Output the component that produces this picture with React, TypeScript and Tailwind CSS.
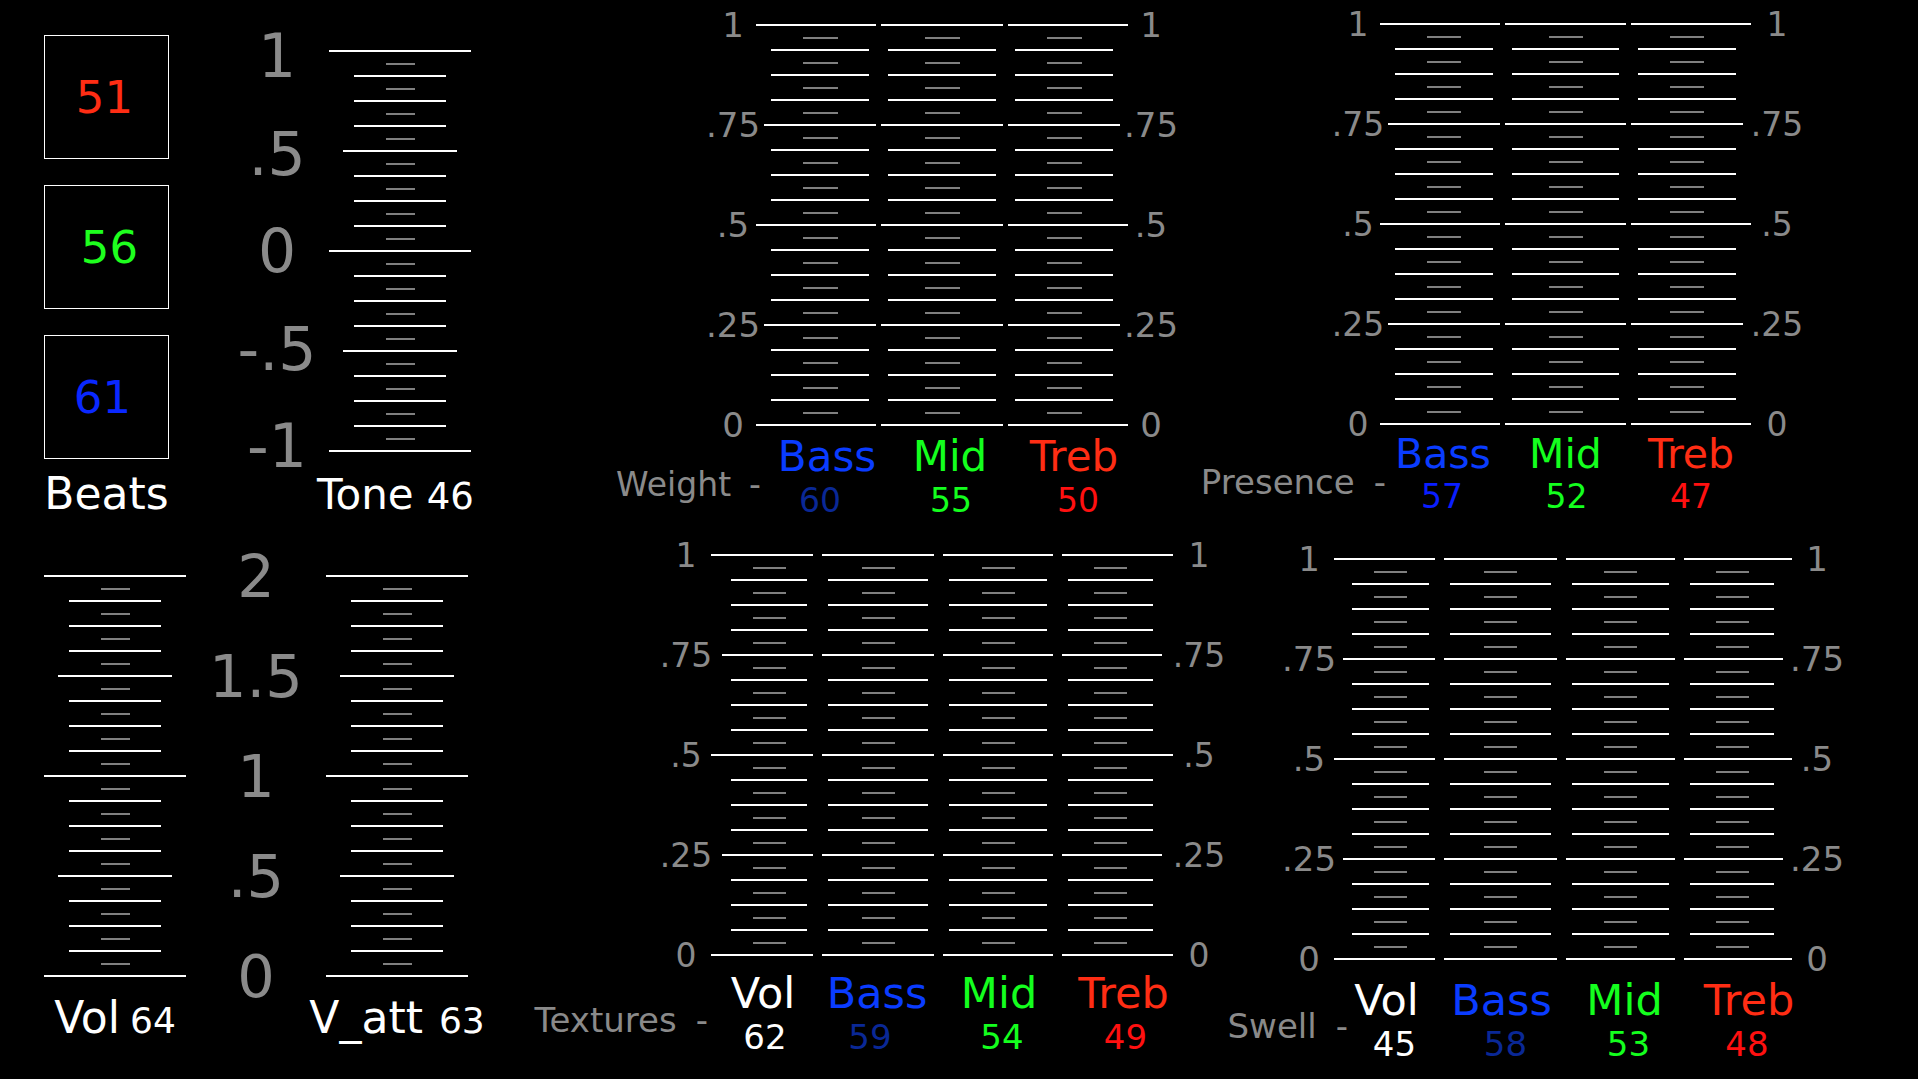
import React from "react";

type TickProps = { w: number; h: number; ml?: number; mr?: number; sl: number; sr: number; g: number };

// ruler drawing: 17 white lines (long / medium / short) with gray ticks between
function Ticks({ w, h, ml = 0, mr = 0, sl, sr, g }: TickProps) {
  const rects: React.ReactNode[] = [];
  for (let i = 0; i <= 16; i++) {
    const y = Math.round((i * h) / 16);
    let x0 = 0;
    let x1 = w;
    if (i % 8 !== 0) {
      if (i % 4 === 0) {
        x0 = ml;
        x1 = w - mr;
      } else {
        x0 = sl;
        x1 = w - sr;
      }
    }
    rects.push(<rect key={"w" + i} x={x0} y={y} width={x1 - x0} height={2} fill="#ffffff" />);
  }
  const cx = (sl + (w - sr)) / 2;
  for (let i = 0; i < 16; i++) {
    const y = Math.round(((i + 0.5) * h) / 16);
    rects.push(<rect key={"g" + i} x={Math.round(cx - g / 2)} y={y} width={g} height={2} fill="#808080" />);
  }
  return (
    <svg width={w} height={h + 2} className="block shrink-0" shapeRendering="crispEdges">
      {rects}
    </svg>
  );
}

function TickLabels({ items, cls }: { items: string[]; cls: string }) {
  return (
    <div className={`flex flex-col justify-between leading-none text-[#8a8a8a] shrink-0 ${cls}`}>
      {items.map((t) => (
        <div key={t} className="h-0 flex items-center justify-center whitespace-nowrap">
          {t}
        </div>
      ))}
    </div>
  );
}

const BLUE = "text-[#0a3cff]";
const DARK = "text-[#0a2896]";
const GREEN = "text-[#14ff1e]";
const RED = "text-[#ff2d14]";
const RED2 = "text-[#ff1010]";
const WHITE = "text-white";

type Col = { w: number; label: string; lc: string; value: string; vc: string; ldx?: string; vdx?: string };

type PanelCfg = {
  name: string;
  pos: string;
  leftW: string;
  rightW: string;
  tick: string;
  gap: string;
  g: number;
  mo: number;
  so: number;
  si: number;
  cols: Col[];
  label: string;
  value: string;
  nameBox: string;
  nameText: string;
};

const PANEL_TICKS = ["1", ".75", ".5", ".25", "0"];

const weight: PanelCfg = {
  name: "Weight",
  pos: "ml-[210px] mt-[24px]",
  leftW: "w-[46px]",
  rightW: "w-[46px]",
  tick: "h-[402px] py-[1px] text-[34px]",
  gap: "gap-[5px]",
  g: 35,
  mo: 8,
  so: 15,
  si: 7,
  cols: [
    { w: 120, label: "Bass", lc: BLUE, value: "60", vc: DARK, ldx: "translate-x-[11px]", vdx: "translate-x-[4px]" },
    { w: 122, label: "Mid", lc: GREEN, value: "55", vc: GREEN, ldx: "translate-x-[8px]", vdx: "translate-x-[9px]" },
    { w: 120, label: "Treb", lc: RED, value: "50", vc: RED2, ldx: "translate-x-[6px]", vdx: "translate-x-[10px]" },
  ],
  label: "text-[42px] mt-[10px]",
  value: "text-[33px] mt-[6px]",
  nameBox: "mt-[42px] mr-[-5px]",
  nameText: "text-[33px] gap-[18px]",
};

const presence: PanelCfg = {
  name: "Presence",
  pos: "ml-[162px] mt-[23px]",
  leftW: "w-[44px]",
  rightW: "w-[52px]",
  tick: "h-[402px] py-[1px] text-[33px]",
  gap: "gap-[5px]",
  g: 34,
  mo: 8,
  so: 15,
  si: 7,
  cols: [
    { w: 120, label: "Bass", lc: BLUE, value: "57", vc: "text-[#0a1eff]", ldx: "translate-x-[3px]", vdx: "translate-x-[2px]" },
    { w: 121, label: "Mid", lc: GREEN, value: "52", vc: GREEN, vdx: "translate-x-[1px]" },
    { w: 120, label: "Treb", lc: RED, value: "47", vc: RED2 },
  ],
  label: "text-[41px] mt-[9px]",
  value: "text-[33px] mt-[5px]",
  nameBox: "mt-[40px] mr-[-6px]",
  nameText: "text-[34px] gap-[19px]",
};

const textures: PanelCfg = {
  name: "Textures",
  pos: "ml-[161px] mt-[14px]",
  leftW: "w-[50px]",
  rightW: "w-[52px]",
  tick: "h-[402px] py-[1px] text-[33px]",
  gap: "gap-[9px]",
  g: 33,
  mo: 11,
  so: 20,
  si: 6,
  cols: [
    { w: 102, label: "Vol", lc: WHITE, value: "62", vc: WHITE, ldx: "translate-x-[1px]", vdx: "translate-x-[3px]" },
    { w: 112, label: "Bass", lc: BLUE, value: "59", vc: DARK, ldx: "-translate-x-[1px]", vdx: "-translate-x-[8px]" },
    { w: 110, label: "Mid", lc: GREEN, value: "54", vc: GREEN, ldx: "translate-x-[1px]", vdx: "translate-x-[4px]" },
    { w: 111, label: "Treb", lc: RED, value: "49", vc: RED2, ldx: "translate-x-[6px]", vdx: "translate-x-[8px]" },
  ],
  label: "text-[43px] mt-[16px]",
  value: "text-[34px] mt-[5px]",
  nameBox: "mt-[47px] mr-[3px]",
  nameText: "text-[34px] gap-[19px]",
};

const swell: PanelCfg = {
  name: "Swell",
  pos: "ml-[59px] mt-[18px]",
  leftW: "w-[50px]",
  rightW: "w-[50px]",
  tick: "h-[402px] py-[1px] text-[34px]",
  gap: "gap-[9px]",
  g: 33,
  mo: 9,
  so: 18,
  si: 6,
  cols: [
    { w: 101, label: "Vol", lc: WHITE, value: "45", vc: WHITE, ldx: "translate-x-[2px]", vdx: "translate-x-[10px]" },
    { w: 113, label: "Bass", lc: BLUE, value: "58", vc: DARK, ldx: "translate-x-[1px]", vdx: "translate-x-[5px]" },
    { w: 109, label: "Mid", lc: GREEN, value: "53", vc: GREEN, ldx: "translate-x-[4px]", vdx: "translate-x-[8px]" },
    { w: 108, label: "Treb", lc: RED, value: "48", vc: RED2, ldx: "translate-x-[11px]", vdx: "translate-x-[9px]" },
  ],
  label: "text-[43px] mt-[19px]",
  value: "text-[34px] mt-[5px]",
  nameBox: "mt-[49px] mr-[-14px]",
  nameText: "text-[34px] gap-[19px]",
};

function Panel({ p }: { p: PanelCfg }) {
  const n = p.cols.length;
  return (
    <div className={`flex items-start shrink-0 ${p.pos}`}>
      <div className={`flex flex-col shrink-0 ${p.leftW}`}>
        <TickLabels items={PANEL_TICKS} cls={`w-full ${p.tick}`} />
        <div className={`flex justify-end ${p.nameBox}`}>
          <div className={`flex items-baseline shrink-0 whitespace-nowrap leading-none text-[#8a8a8a] ${p.nameText}`}>
            <span>{p.name}</span>
            <span>-</span>
          </div>
        </div>
      </div>
      <div className={`flex ${p.gap}`}>
        {p.cols.map((c, j) => (
          <div key={c.label} className="flex flex-col items-center">
            <Ticks
              w={c.w}
              h={400}
              ml={j === 0 ? p.mo : 0}
              mr={j === n - 1 ? p.mo : 0}
              sl={j === 0 ? p.so : p.si}
              sr={j === n - 1 ? p.so : p.si}
              g={p.g}
            />
            <div className={`leading-none whitespace-nowrap ${c.lc} ${p.label} ${c.ldx ?? ""}`}>{c.label}</div>
            <div className={`leading-none whitespace-nowrap ${c.vc} ${p.value} ${c.vdx ?? ""}`}>{c.value}</div>
          </div>
        ))}
      </div>
      <TickLabels items={PANEL_TICKS} cls={`${p.rightW} ${p.tick}`} />
    </div>
  );
}

function BeatBox({ value, color }: { value: string; color: string }) {
  return (
    <div className="w-[125px] h-[124px] border border-white flex items-center justify-center">
      <span className={`text-[45px] leading-none ${color}`}>{value}</span>
    </div>
  );
}

export default function App() {
  return (
    <div className="w-[1918px] h-[1079px] bg-black overflow-hidden flex font-['DejaVu_Sans',sans-serif]">
      {/* left side: beats, tone, vol, v_att */}
      <div className="w-[500px] shrink-0 flex flex-col">
        <div className="h-[540px] flex items-start pl-[44px]">
          <div className="mt-[35px] flex flex-col items-center w-[125px]">
            <div className="flex flex-col gap-[26px]">
              <BeatBox value="51" color="text-[#ff2d14] -translate-x-[2px]" />
              <BeatBox value="56" color="text-[#1eff1e] translate-x-[3px]" />
              <BeatBox value="61" color="text-[#0a28ff] -translate-x-[4px]" />
            </div>
            <div className="mt-[13px] text-[44px] leading-none text-white">Beats</div>
          </div>
          <div className="ml-[56px] mt-[50px] flex flex-col">
            <div className="flex items-start">
              <TickLabels items={["1", ".5", "0", "-.5", "-1"]} cls="w-[104px] h-[390px] mt-[6px] text-[60px]" />
              <Ticks w={142} h={400} ml={14} mr={14} sl={25} sr={25} g={29} />
            </div>
            <div className="mt-[22px] ml-[92px] flex items-baseline leading-none text-white whitespace-nowrap">
              <span className="text-[42px]">Tone</span>
              <span className="text-[37px] ml-[13px]">46</span>
            </div>
          </div>
        </div>
        <div className="flex items-start pl-[44px] mt-[35px]">
          <div className="w-[142px] shrink-0 flex flex-col items-center">
            <Ticks w={142} h={400} ml={14} mr={14} sl={25} sr={25} g={29} />
            <div className="mt-[19px] flex shrink-0 items-baseline leading-none text-white whitespace-nowrap">
              <span className="text-[44px]">Vol</span>
              <span className="text-[36px] ml-[10px]">64</span>
            </div>
          </div>
          <TickLabels items={["2", "1.5", "1", ".5", "0"]} cls="w-[140px] h-[402px] py-[1px] text-[59px]" />
          <div className="w-[142px] shrink-0 flex flex-col items-center">
            <Ticks w={142} h={400} ml={14} mr={14} sl={25} sr={25} g={29} />
            <div className="mt-[19px] flex shrink-0 items-baseline leading-none text-white whitespace-nowrap">
              <span className="text-[44px]">V_att</span>
              <span className="text-[36px] ml-[16px]">63</span>
            </div>
          </div>
        </div>
      </div>

      {/* right side: the four band panels */}
      <div className="flex-1 flex flex-col">
        <div className="h-[540px] flex items-start">
          <Panel p={weight} />
          <Panel p={presence} />
        </div>
        <div className="flex items-start">
          <Panel p={textures} />
          <Panel p={swell} />
        </div>
      </div>
    </div>
  );
}
